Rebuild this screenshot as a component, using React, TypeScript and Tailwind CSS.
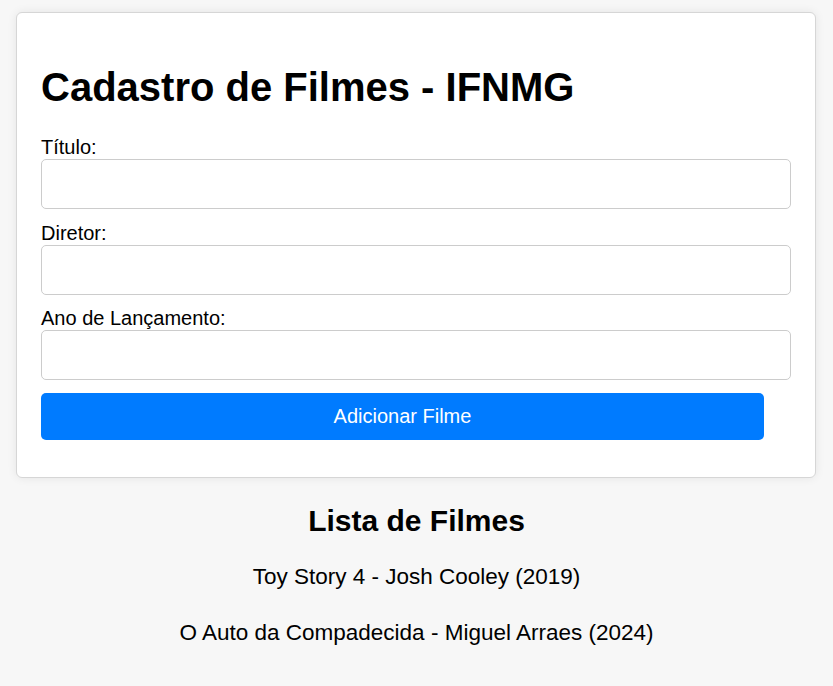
const filmes = [
  { titulo: 'Toy Story 4', diretor: 'Josh Cooley', ano: 2019 },
  { titulo: 'O Auto da Compadecida', diretor: 'Miguel Arraes', ano: 2024 },
];

function Campo({ label, type = 'text' }: { label: string; type?: string }) {
  return (
    <>
      <label className="block text-[20px] leading-[23px]">{label}</label>
      <input
        type={type}
        className="block w-full h-[50px] mb-[12.5px] px-[12px] border border-[#ccc] rounded-[5px] text-[20px] bg-white"
      />
    </>
  );
}

export default function App() {
  return (
    <div className="min-h-[686px] bg-[#f7f7f7] px-[16px] pt-[12px] pb-[12px] text-black font-['Liberation_Sans',Arial,sans-serif]">
      <div className="max-w-[800px] bg-white border border-[#d6d6d6] rounded-[6px] shadow-[0_0_10px_rgba(0,0,0,0.08)] px-[24px] pt-[24px] pb-[25px]">
        <h1 className="text-[40px] font-bold leading-[46px] mt-[27px] mb-[26px]">Cadastro de Filmes - IFNMG</h1>
        <form onSubmit={(e) => e.preventDefault()}>
          <Campo label="Título:" />
          <Campo label="Diretor:" />
          <Campo label="Ano de Lançamento:" type="number" />
          <button
            type="submit"
            className="block w-[723px] h-[47.5px] mb-[12px] bg-[#007bff] text-white text-[20px] rounded-[5px]"
          >
            Adicionar Filme
          </button>
        </form>
      </div>
      <h2 className="text-center text-[30px] font-bold leading-[34.5px] mt-[25.5px] mb-[26px]">Lista de Filmes</h2>
      <ul className="text-center text-[22.5px]">
        {filmes.map((f) => (
          <li key={f.titulo} className="leading-[26px] mb-[30px]">
            {f.titulo} - {f.diretor} ({f.ano})
          </li>
        ))}
      </ul>
    </div>
  );
}
